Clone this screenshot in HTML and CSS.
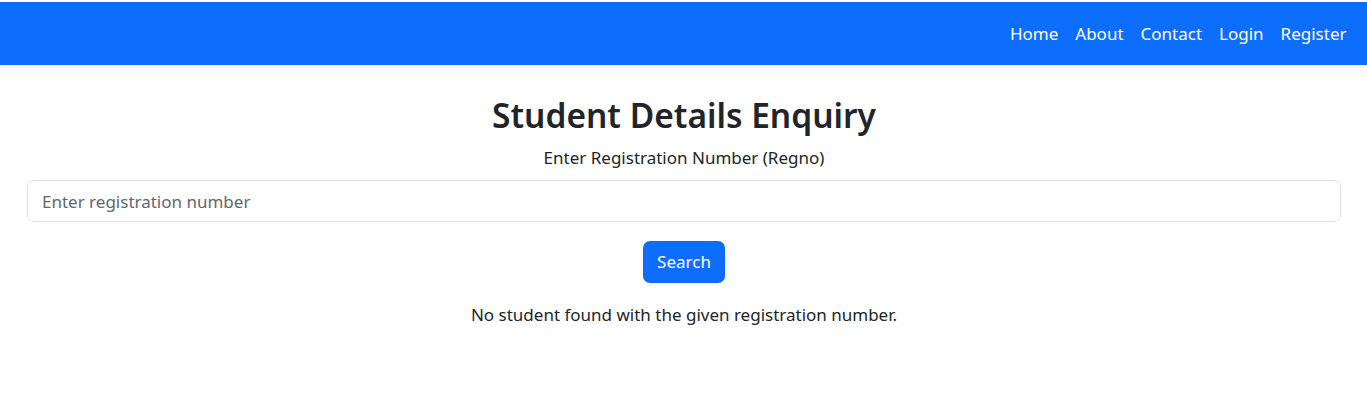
FILE: index.html
```html
<!DOCTYPE html>
<html lang="en">
<head>
<meta charset="utf-8">
<title>Student Details Enquiry</title>
<link rel="stylesheet" href="styles.css">
</head>
<body>
<nav class="navbar">
  <ul class="nav-links">
    <li><a class="nav-link" href="#">Home</a></li>
    <li><a class="nav-link" href="#">About</a></li>
    <li><a class="nav-link" href="#">Contact</a></li>
    <li><a class="nav-link" href="#">Login</a></li>
    <li><a class="nav-link" href="#">Register</a></li>
  </ul>
</nav>
<main class="page">
  <h2 class="title">Student Details Enquiry</h2>
  <form class="search-form">
    <label class="field-label" for="regno">Enter Registration Number (Regno)</label>
    <input class="field-input" id="regno" type="text" placeholder="Enter registration number">
    <button class="btn-search" type="button">Search</button>
  </form>
  <p class="result-msg">No student found with the given registration number.</p>
</main>
</body>
</html>
```
FILE: styles.css
```css
* { box-sizing: border-box; }
html, body { margin: 0; padding: 0; background: #fff; }
body {
  font-family: "Noto Sans", "Open Sans", sans-serif;
  font-size: 17px;
  color: #212529;
  padding-top: 2px;
}
.navbar {
  height: 63px;
  background: #0d6efd;
  display: flex;
  align-items: center;
  justify-content: flex-end;
  padding-right: 12px;
}
.nav-links {
  list-style: none;
  margin: 0;
  padding: 0;
  display: flex;
}
.nav-link {
  display: block;
  color: #fff;
  text-decoration: none;
  padding: 0 8.5px;
  line-height: 26px;
  font-size: 17px;
}
.page {
  padding: 30px 26px 0 27px;
  display: flex;
  flex-direction: column;
  align-items: center;
}
.title {
  margin: 0 0 10px;
  font-size: 33.5px;
  font-weight: 600;
  line-height: 40px;
  color: #212529;
}
.search-form {
  width: 100%;
  display: flex;
  flex-direction: column;
  align-items: center;
}
.field-label {
  line-height: 26px;
  font-size: 17px;
  margin-bottom: 9px;
}
.field-input {
  width: 100%;
  height: 42px;
  border: 1px solid #dee2e6;
  border-radius: 7px;
  padding: 1px 14px 0;
  font-family: inherit;
  font-size: 17px;
  color: #212529;
  outline: none;
}
.field-input::placeholder { color: #62676c; }
.btn-search {
  margin-top: 19px;
  height: 42px;
  width: 82px;
  padding: 0 0 2px;
  border: none;
  border-radius: 7px;
  background: #0d6efd;
  color: #fff;
  font-family: inherit;
  font-size: 17px;
}
.result-msg {
  margin: 19px 0 0;
  line-height: 26px;
  font-size: 17px;
}
```
